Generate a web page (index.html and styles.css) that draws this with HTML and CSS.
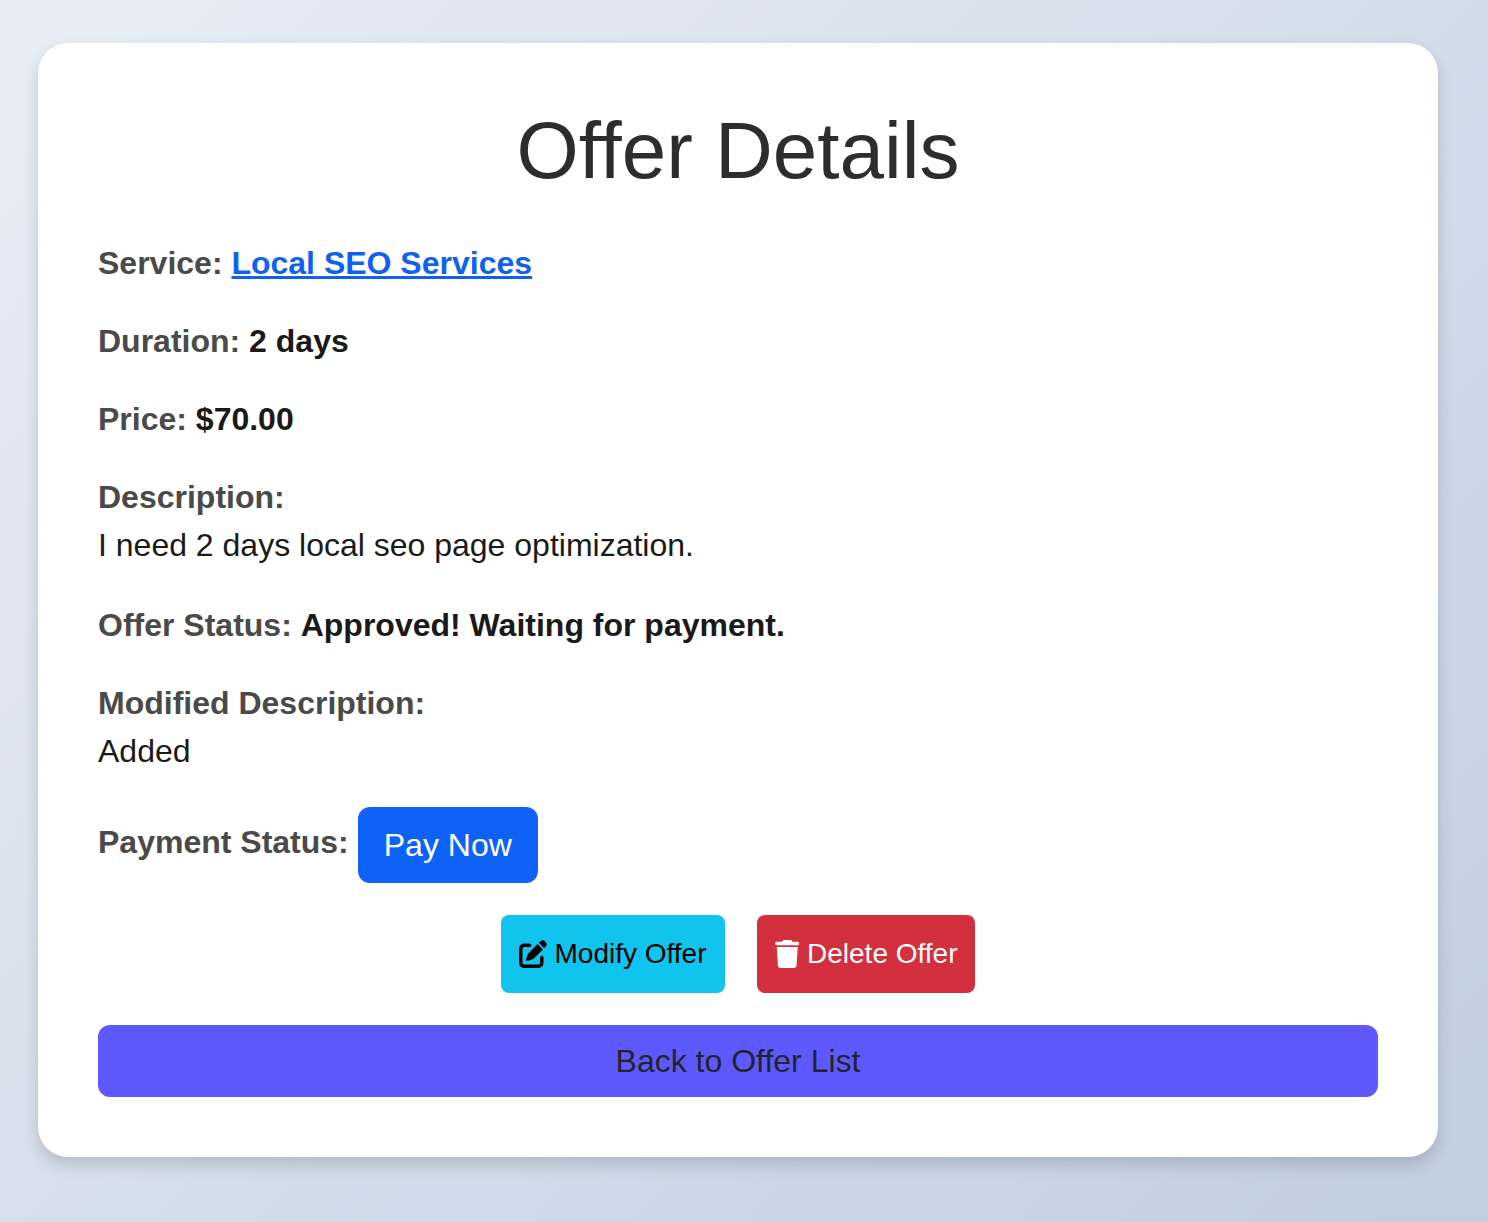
FILE: index.html
```html
<!DOCTYPE html>
<html lang="en">
<head>
    <meta charset="UTF-8">
    <meta name="viewport" content="width=device-width, initial-scale=1.0">
    <title>Offer Details</title>
    <link rel="stylesheet" href="styles.css">
</head>
<body>
    <div class="offer-card">
        <h1>Offer Details</h1>

        <p class="row"><span class="label">Service:</span> <a href="#" class="service-link">Local SEO Services</a></p>
        <p class="row"><span class="label">Duration:</span> <strong>2 days</strong></p>
        <p class="row"><span class="label">Price:</span> <strong>$70.00</strong></p>
        <p class="row row-long"><span class="label">Description:</span><br>I need 2 days local seo page optimization.</p>
        <p class="row"><span class="label">Offer Status:</span> <strong>Approved! Waiting for payment.</strong></p>
        <p class="row row-long"><span class="label">Modified Description:</span><br>Added</p>

        <div class="payment-row">
            <span class="label">Payment Status:</span>
            <a href="#" class="btn btn-pay">Pay Now</a>
        </div>

        <div class="actions">
            <a href="#" class="btn btn-action btn-modify">
                <!-- pen-to-square -->
                <svg class="icon" viewBox="0 0 512 512" fill="currentColor"><path d="M471.6 21.7c-21.9-21.9-57.3-21.9-79.2 0L362.3 51.7l97.9 97.9 30.1-30.1c21.9-21.9 21.9-57.3 0-79.2L471.6 21.7zm-299.2 220c-6.1 6.1-10.8 13.6-13.5 21.9l-29.6 88.8c-2.9 8.6-.6 18.1 5.8 24.6s15.9 8.7 24.6 5.8l88.8-29.6c8.2-2.7 15.7-7.4 21.9-13.5L437.7 172.3 339.7 74.3 172.4 241.7zM96 64C43 64 0 107 0 160V416c0 53 43 96 96 96H352c53 0 96-43 96-96V320c0-17.7-14.3-32-32-32s-32 14.3-32 32v96c0 17.7-14.3 32-32 32H96c-17.7 0-32-14.3-32-32V160c0-17.7 14.3-32 32-32h96c17.7 0 32-14.3 32-32s-14.3-32-32-32H96z"/></svg>
                Modify Offer
            </a>
            <a href="#" class="btn btn-action btn-delete">
                <!-- trash -->
                <svg class="icon icon-trash" viewBox="0 0 448 512" fill="currentColor"><path d="M135.2 17.7L128 32H32C14.3 32 0 46.3 0 64S14.3 96 32 96H416c17.7 0 32-14.3 32-32s-14.3-32-32-32H320l-7.2-14.3C307.4 6.8 296.3 0 284.2 0H163.8c-12.1 0-23.2 6.8-28.6 17.7zM416 128H32L53.2 467c1.6 25.3 22.6 45 47.9 45H346.9c25.3 0 46.3-19.7 47.9-45L416 128z"/></svg>
                Delete Offer
            </a>
        </div>

        <a href="#" class="btn btn-back">Back to Offer List</a>
    </div>
</body>
</html>
```

FILE: styles.css
```css
* {
    margin: 0;
    padding: 0;
    box-sizing: border-box;
}

body {
    min-height: 1222px;
    padding: 43px 50px 65px 38px;
    background: linear-gradient(135deg, #e8edf5 0%, #c1cee0 100%);
    font-family: "Liberation Sans", Arial, sans-serif;
    font-size: 32px;
    line-height: 48px;
    color: #1a1a1a;
}

.offer-card {
    height: 1114px;
    padding: 60px;
    background-color: #fff;
    border-radius: 30px;
    box-shadow: 0 8px 16px rgba(0, 0, 0, 0.15);
}

h1 {
    margin-bottom: 40px;
    text-align: center;
    font-size: 80px;
    font-weight: 400;
    line-height: 96px;
    color: #2d2d2d;
}

.row {
    margin-bottom: 30px;
}

.row-long {
    margin-bottom: 32px;
}

.label {
    font-weight: 700;
    color: #4a4a4a;
}

.service-link {
    font-weight: 700;
    color: #0f62f0;
}

.btn {
    display: block;
    text-decoration: none;
    text-align: center;
}

.payment-row {
    display: flex;
    align-items: center;
    gap: 9px;
    margin-bottom: 32px;
}

.payment-row .label {
    margin-top: -6px;
}

.btn-pay {
    padding: 14px 26px;
    background-color: #0f62f8;
    border-radius: 12px;
    color: #fff;
}

.actions {
    display: flex;
    justify-content: center;
    gap: 32px;
    margin-bottom: 32px;
}

.btn-action {
    display: flex;
    align-items: center;
    gap: 8px;
    height: 78px;
    padding: 0 18px;
    border-radius: 8px;
    font-size: 28px;
}

.icon {
    width: 28px;
    height: 28px;
}

.icon-trash {
    width: 24.5px;
}

.btn-modify {
    background-color: #10c4ee;
    color: #000;
}

.btn-delete {
    background-color: #d32f3f;
    color: #fff;
}

.btn-back {
    height: 72px;
    padding: 12px;
    background-color: #6058ff;
    border-radius: 12px;
    color: #212529;
}
```
